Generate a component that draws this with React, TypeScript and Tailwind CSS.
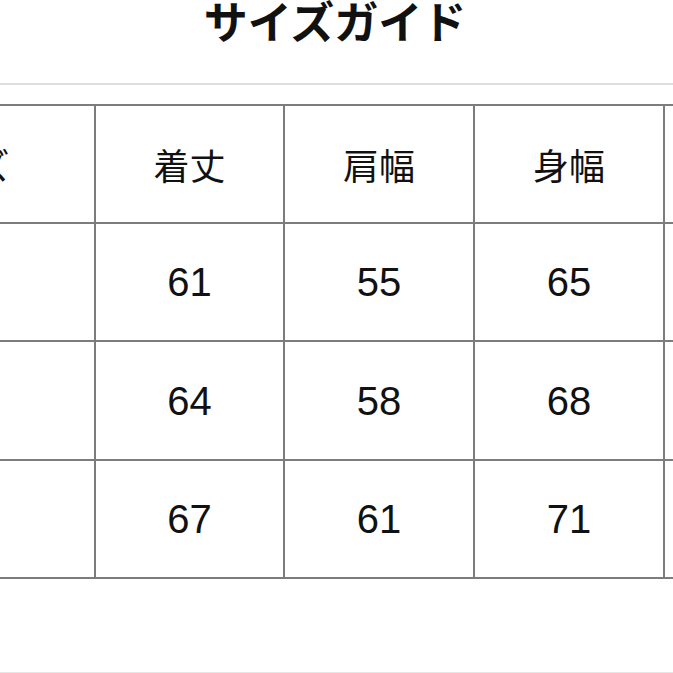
import React from 'react';

const headers = ['サイズ', '着丈', '肩幅', '身幅', '袖丈'];

const rows = [
  ['M', '61', '55', '65', '22'],
  ['L', '64', '58', '68', '23'],
  ['XL', '67', '61', '71', '24'],
];

const App: React.FC = () => {
  return (
    <div className="w-[673px] h-[673px] overflow-hidden bg-white relative font-['Liberation_Sans','Noto_Sans_CJK_JP',sans-serif] text-[#111]">
      <div className="h-[83px] flex justify-center">
        <h1 className="text-[44px] leading-[40px] font-bold font-['Noto_Sans_CJK_JP',sans-serif] pr-[3px]">
          サイズガイド
        </h1>
      </div>
      <div className="h-[2px] bg-[#dedede]" />
      <div className="h-[19px]" />

      <div className="-ml-[182px] w-max grid grid-cols-[276px_187px_188px_188px_188px] grid-rows-[116px_116px_117px_116px] gap-[2px] py-[2px] bg-[#7c7c7c]">
        {headers.map((h) => (
          <div
            key={h}
            className="bg-white flex items-center justify-center text-[36px] font-['Noto_Sans_CJK_JP',sans-serif] font-normal"
          >
            {h}
          </div>
        ))}
        {rows.map((row) =>
          row.map((cell, i) => (
            <div
              key={row[0] + i}
              className="bg-white flex items-center justify-center text-[40px]"
            >
              {cell}
            </div>
          ))
        )}
      </div>

      <div className="absolute left-0 right-0 bottom-0 h-[1px] bg-[#e6e6e6]" />
    </div>
  );
};

export default App;
